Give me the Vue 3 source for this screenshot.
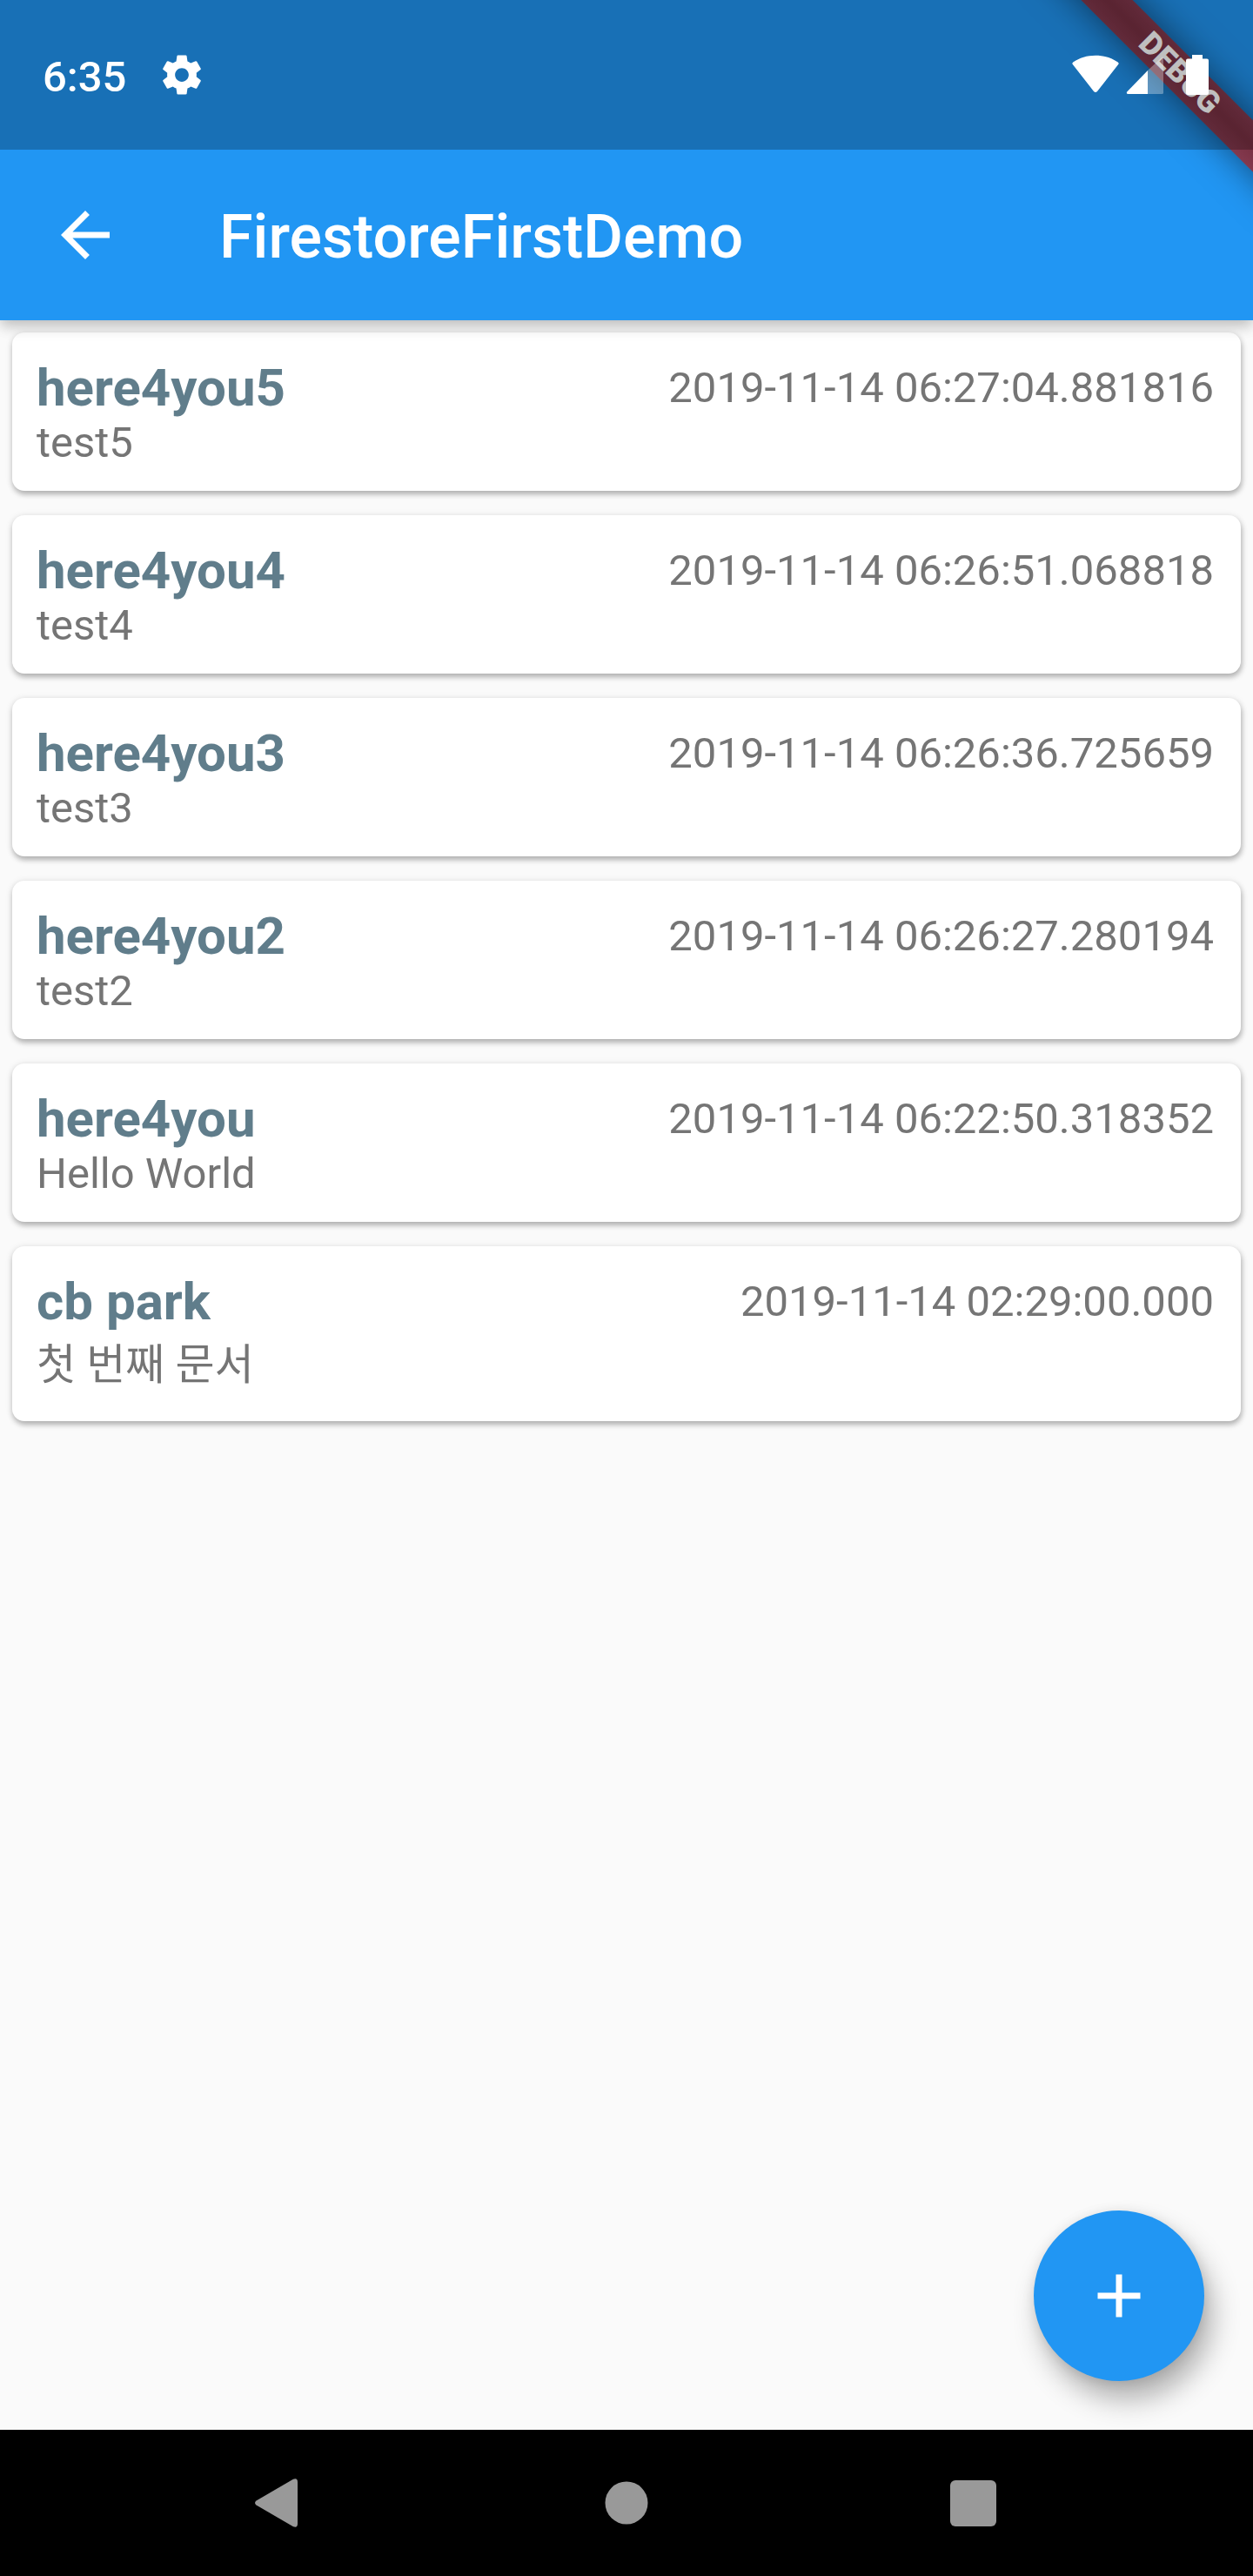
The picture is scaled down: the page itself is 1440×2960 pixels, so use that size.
<script setup>
const posts = [
  { author: 'here4you5', text: 'test5', date: '2019-11-14 06:27:04.881816' },
  { author: 'here4you4', text: 'test4', date: '2019-11-14 06:26:51.068818' },
  { author: 'here4you3', text: 'test3', date: '2019-11-14 06:26:36.725659' },
  { author: 'here4you2', text: 'test2', date: '2019-11-14 06:26:27.280194' },
  { author: 'here4you', text: 'Hello World', date: '2019-11-14 06:22:50.318352' },
  { author: 'cb park', text: '첫 번째 문서', date: '2019-11-14 02:29:00.000', lang: 'ko' }
]
</script>

<template>
  <div class="screen">
    <header class="top">
      <div class="banner-clip">
        <div class="banner">DEBUG</div>
      </div>
      <div class="status">
        <span class="clock">6:35</span>
        <svg class="gear" viewBox="0 0 24 24" aria-hidden="true">
          <path d="M19.43 12.98c.04-.32.07-.64.07-.98s-.03-.66-.07-.98l2.11-1.65c.19-.15.24-.42.12-.64l-2-3.46c-.12-.22-.39-.3-.61-.22l-2.49 1c-.52-.4-1.08-.73-1.69-.98l-.38-2.65C14.46 2.18 14.25 2 14 2h-4c-.25 0-.46.18-.49.42l-.38 2.65c-.61.25-1.17.59-1.69.98l-2.49-1c-.23-.09-.49 0-.61.22l-2 3.46c-.13.22-.07.49.12.64l2.11 1.65c-.04.32-.07.65-.07.98s.03.66.07.98l-2.11 1.65c-.19.15-.24.42-.12.64l2 3.46c.12.22.39.3.61.22l2.49-1c.52.4 1.08.73 1.69.98l.38 2.65c.03.24.24.42.49.42h4c.25 0 .46-.18.49-.42l.38-2.65c.61-.25 1.17-.59 1.69-.98l2.49 1c.23.09.49 0 .61-.22l2-3.46c.12-.22.07-.49-.12-.64l-2.11-1.65zM12 15.5c-1.93 0-3.5-1.57-3.5-3.5s1.57-3.5 3.5-3.5 3.5 1.57 3.5 3.5-1.57 3.5-3.5 3.5z" />
        </svg>
        <div class="indicators">
          <svg width="54" height="46" viewBox="0 0 54 46" aria-hidden="true">
            <path d="M1.2 11.6Q-.5 10 1.2 8.6C8.500 3.500 17.500.8 27 .8S45.500 3.500 52.800 8.600Q54.500 10 52.800 11.600L29 42Q27 44.200 25 42Z" />
          </svg>
          <svg width="43" height="46" viewBox="0 0 43 46" aria-hidden="true">
            <path fill-opacity=".32" d="M25 18 40.500 3.500Q43 1.500 43 4V43.500Q43 45 41.500 45H25Z" />
            <path d="M25 18V45H2.500Q0 45 1.200 42.500Z" />
          </svg>
          <svg class="battery" width="26" height="46" viewBox="0 0 26 46" aria-hidden="true">
            <path d="M7 0H19V4.500H24Q26 4.500 26 6.500V44Q26 46 24 46H2Q0 46 0 44V6.500Q0 4.500 2 4.500H7Z" />
          </svg>
        </div>
      </div>
      <div class="appbar">
        <button class="back" type="button" aria-label="Back">
          <svg viewBox="0 0 24 24"><path d="M20 11H7.830l5.590-5.590L12 4l-8 8 8 8 1.410-1.410L7.830 13H20v-2z" /></svg>
        </button>
        <h1>FirestoreFirstDemo</h1>
      </div>
    </header>

    <main>
      <ul>
        <li v-for="post in posts" :key="post.date" class="card">
          <div class="row">
            <h2>{{ post.author }}</h2>
            <time>{{ post.date }}</time>
          </div>
          <p :lang="post.lang">{{ post.text }}</p>
        </li>
      </ul>
      <button class="fab" type="button" aria-label="Add">
        <svg viewBox="0 0 24 24"><path d="M19 13h-6v6h-2v-6H5v-2h6V5h2v6h6v2z" /></svg>
      </button>
    </main>

    <nav>
      <button type="button" aria-label="Back">
        <svg width="54" height="56" viewBox="0 0 54 56"><path d="M1.500 25.500 44 .8Q49 -1 49 4V52Q49 57 44 55.200L1.500 30.500Q-1.500 28 1.500 25.500Z" /></svg>
      </button>
      <button type="button" aria-label="Home">
        <svg width="50" height="50" viewBox="0 0 50 50"><circle cx="25" cy="25" r="24.500" /></svg>
      </button>
      <button type="button" aria-label="Overview">
        <svg width="56" height="53" viewBox="0 0 56 53"><rect width="53" height="53" rx="6" /></svg>
      </button>
    </nav>
  </div>
</template>

<style>
body {
  margin: 0;
  background: #fafafa;
}
</style>

<style scoped>
.screen {
  display: flex;
  flex-direction: column;
  min-height: 100vh;
  font-family: Roboto, "Noto Sans CJK KR", sans-serif;
  background: #fafafa;
}

button {
  display: flex;
  align-items: center;
  justify-content: center;
  padding: 0;
  border: 0;
  background: none;
  cursor: pointer;
}

svg {
  display: block;
  fill: currentColor;
}

.top {
  position: relative;
  z-index: 1;
  color: #fff;
  background: #2196f3;
  box-shadow: 0 6px 14px rgba(0, 0, 0, 0.2), 0 14px 18px -4px rgba(0, 0, 0, 0.06);
}

.banner-clip {
  position: absolute;
  inset: 0;
  overflow: hidden;
}

/* corner ribbon, centred 84px in from the top right corner */
.banner {
  position: absolute;
  top: 63px;
  right: -116px;
  width: 400px;
  height: 42px;
  font-size: 36px;
  font-weight: 900;
  line-height: 42px;
  text-align: center;
  background: linear-gradient(#83394e, #783042 50%, #83394e);
  box-shadow: 0 0 42px rgba(0, 0, 0, 0.5);
  transform: rotate(45deg);
}

.status {
  position: relative;
  display: flex;
  align-items: center;
  height: 172px;
  padding: 0 51px 0 49px;
  background: rgba(0, 0, 0, 0.25);
}

.clock {
  padding-top: 4px;
  font-size: 49px;
  font-weight: 500;
}

.gear {
  width: 54px;
  height: 54px;
  margin-left: 37px;
}

.indicators {
  display: flex;
  align-items: center;
  gap: 8px;
  margin-left: auto;
}

.battery {
  margin-left: 18px;
}

.appbar {
  display: flex;
  align-items: center;
  height: 196px;
}

.back {
  width: 196px;
  height: 196px;
  color: #fff;
}

.back svg,
.fab svg {
  width: 84px;
  height: 84px;
}

h1 {
  margin: 0 0 0 56px;
  padding-top: 4px;
  font-size: 70px;
  font-weight: 500;
  line-height: 82px;
}

main {
  position: relative;
  flex: 1;
}

ul {
  display: flex;
  flex-direction: column;
  gap: 28px;
  margin: 0;
  padding: 14px 14px 224px;
  list-style: none;
}

.card {
  padding: 29px 31px 27px 28px;
  border-radius: 14px;
  background: #fff;
  box-shadow: 1px 4px 6px rgba(0, 0, 0, 0.26), 0 1px 8px rgba(0, 0, 0, 0.1);
}

.row {
  display: flex;
  align-items: center;
  justify-content: space-between;
}

h2 {
  margin: 0;
  color: #607d8b;
  font-size: 60px;
  font-weight: 700;
  line-height: 70px;
}

time,
p {
  margin: 0;
  color: #757575;
  font-size: 49px;
  line-height: 56px;
}

p:lang(ko) {
  line-height: 75px;
}

.fab {
  position: absolute;
  right: 56px;
  bottom: 56px;
  width: 196px;
  height: 196px;
  border-radius: 50%;
  color: #fff;
  background: #2196f3;
  box-shadow: 9px 21px 32px rgba(0, 0, 0, 0.3), 0 2px 14px rgba(0, 0, 0, 0.1);
}

nav {
  display: flex;
  height: 168px;
  padding: 0 120px;
  background: #000;
}

nav button {
  flex: 1;
  color: #999;
}
</style>
